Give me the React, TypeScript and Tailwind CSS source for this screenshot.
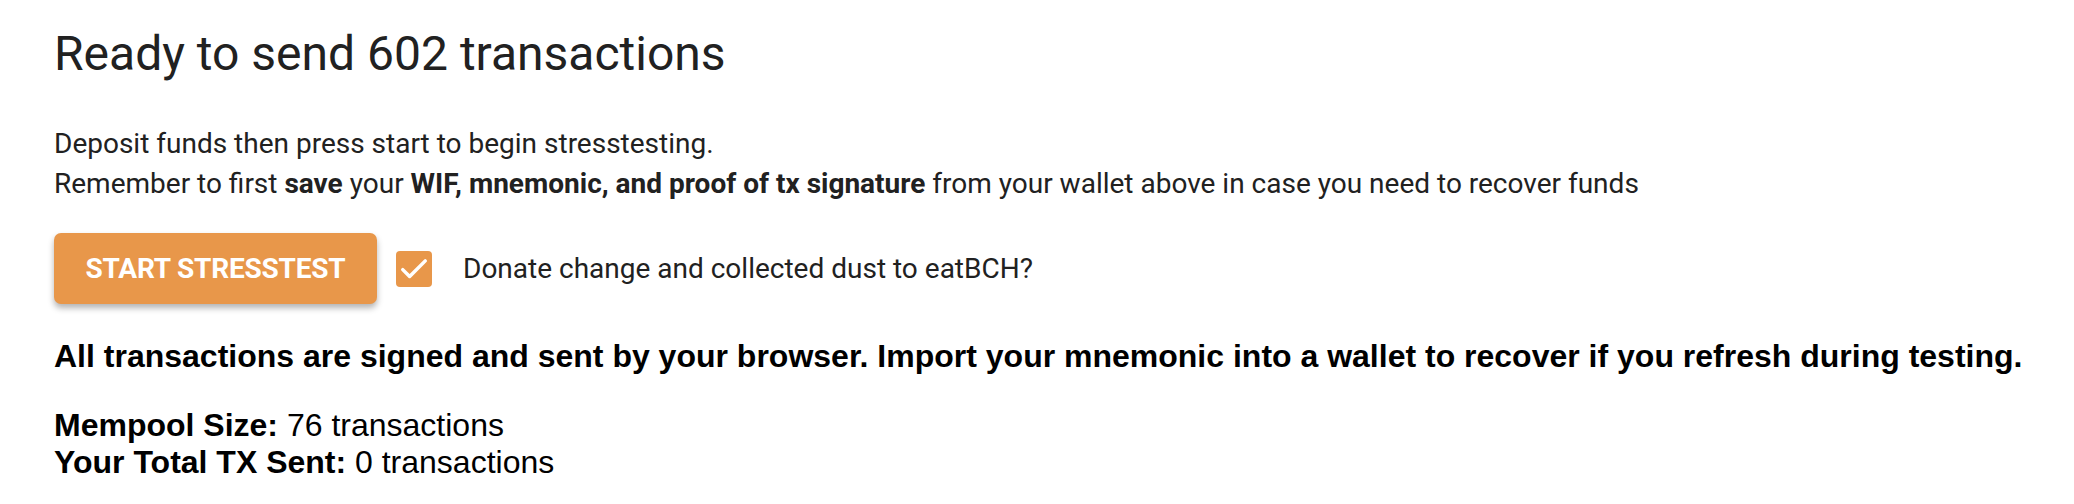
export default function App() {
  return (
    <div className="min-h-[504px] bg-white pl-[54px] pt-[24px] font-['Roboto',sans-serif] text-[#212121]">
      <h1 className="text-[48px] leading-[60px] font-normal">Ready to send 602 transactions</h1>

      <div className="mt-[40px] text-[28px] leading-[40px]">
        <p>Deposit funds then press start to begin stresstesting.</p>
        <p>
          Remember to first <b className="font-bold">save</b> your{' '}
          <b className="font-bold">WIF, mnemonic, and proof of tx signature</b> from your wallet above in case you need to
          recover funds
        </p>
      </div>

      <div className="mt-[29px] flex items-center">
        <button
          type="button"
          className="h-[71px] w-[323px] rounded-[7px] bg-[#e8974a] text-[28px] font-bold tracking-[-0.2px] text-white uppercase shadow-[0_4px_6px_rgba(0,0,0,0.3)]"
        >
          Start Stresstest
        </button>
        <label className="ml-[19px] flex items-center">
          <span className="flex h-[36px] w-[36px] items-center justify-center rounded-[4px] bg-[#e8974a]">
            <svg width="30" height="30" viewBox="0 0 24 24" fill="none">
              <path d="M3 12.5l5.5 5.5L21 5.5" stroke="white" strokeWidth="2.8" strokeLinecap="round" strokeLinejoin="round" />
            </svg>
          </span>
          <span className="ml-[31px] text-[28px]">Donate change and collected dust to eatBCH?</span>
        </label>
      </div>

      <p className="mt-[33px] font-['Liberation_Sans',Arial,sans-serif] text-[32px] leading-[38px] font-bold text-black">
        All transactions are signed and sent by your browser. Import your mnemonic into a wallet to recover if you refresh
        during testing.
      </p>

      <div className="mt-[32px] font-['Liberation_Sans',Arial,sans-serif] text-[32px] leading-[37px] text-black">
        <p>
          <b>Mempool Size:</b> 76 transactions
        </p>
        <p>
          <b>Your Total TX Sent:</b> 0 transactions
        </p>
      </div>
    </div>
  );
}
